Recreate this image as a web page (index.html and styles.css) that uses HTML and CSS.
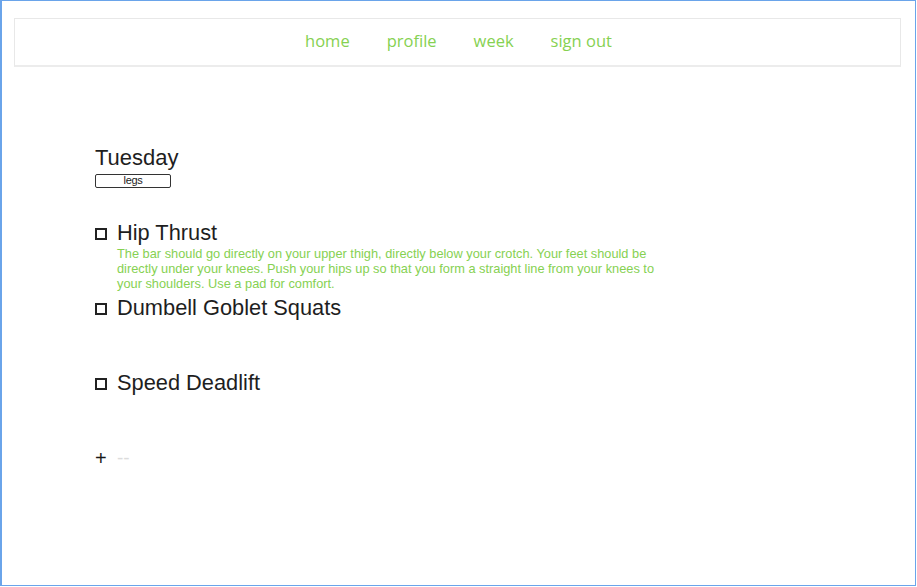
FILE: index.html
```html
<!DOCTYPE html>
<html>
<head>
<meta charset="utf-8">
<link rel="stylesheet" href="styles.css">
</head>
<body>
<div class="frame">
  <nav class="nav">
    <a class="nav-link" href="#">home</a>
    <a class="nav-link" href="#">profile</a>
    <a class="nav-link" href="#">week</a>
    <a class="nav-link" href="#">sign out</a>
  </nav>
  <main class="day">
    <h1 class="day-title">Tuesday</h1>
    <div class="tag">legs</div>
    <ul class="exercises">
      <li class="exercise">
        <div class="exercise-head"><span class="box"></span><span class="exercise-name">Hip Thrust</span></div>
        <p class="exercise-desc">The bar should go directly on your upper thigh, directly below your crotch. Your feet should be directly under your knees. Push your hips up so that you form a straight line from your knees to your shoulders. Use a pad for comfort.</p>
      </li>
      <li class="exercise">
        <div class="exercise-head"><span class="box"></span><span class="exercise-name">Dumbell Goblet Squats</span></div>
      </li>
      <li class="exercise">
        <div class="exercise-head"><span class="box"></span><span class="exercise-name">Speed Deadlift</span></div>
      </li>
      <li class="add-row">
        <span class="plus">+</span><span class="placeholder">--</span>
      </li>
    </ul>
  </main>
</div>
</body>
</html>
```

FILE: styles.css
```css
html, body {
  margin: 0;
  padding: 0;
  background: #fff;
}
.frame {
  box-sizing: border-box;
  width: 916px;
  height: 586px;
  border: 1px solid #6aa4ea;
  border-left-width: 2px;
  padding: 17px 14px 0 12px;
  font-family: "Liberation Sans", Arial, sans-serif;
  color: #222;
}
.nav {
  box-sizing: border-box;
  height: 49px;
  border: 1px solid #e8e8e8;
  border-bottom: 2px solid #ececec;
  display: flex;
  justify-content: center;
  align-items: center;
  padding: 0 0 2px 2px;
  gap: 37px;
}
.nav-link {
  font-family: "Open Sans", sans-serif;
  font-size: 16.5px;
  color: #86d152;
  text-decoration: none;
  line-height: 22px;
}
.day {
  padding: 78px 0 0 81px;
}
.day-title {
  margin: 0;
  font-size: 22px;
  font-weight: normal;
  line-height: 25px;
  color: #1e1e1e;
}
.tag {
  box-sizing: border-box;
  margin-top: 4px;
  width: 76px;
  height: 14px;
  border: 1px solid #333;
  border-right-width: 1.5px;
  border-bottom-width: 1.5px;
  border-radius: 2px;
  font-size: 11px;
  line-height: 11px;
  text-align: center;
  letter-spacing: -0.3px;
}
.exercises {
  list-style: none;
  margin: 32px 0 0 0;
  padding: 0;
}
.exercise {
  min-height: 75px;
}
.exercise-head {
  display: flex;
  align-items: center;
  height: 25px;
}
.box {
  box-sizing: border-box;
  width: 12px;
  height: 12px;
  border: 2px solid #222;
  margin-right: 10px;
  margin-top: 2px;
}
.exercise-name {
  font-size: 21.8px;
  line-height: 25px;
  color: #1e1e1e;
}
.exercise-desc {
  margin: 1px 0 0 22px;
  width: 560px;
  font-size: 12.8px;
  line-height: 15px;
  color: #86d152;
}
.add-row {
  display: flex;
  align-items: center;
  height: 25px;
}
.plus {
  width: 22px;
  font-size: 20px;
  line-height: 25px;
  margin-top: 1px;
  color: #1a1a1a;
}
.placeholder {
  font-size: 19px;
  color: #dcdcdc;
  margin-top: 0;
}
```
